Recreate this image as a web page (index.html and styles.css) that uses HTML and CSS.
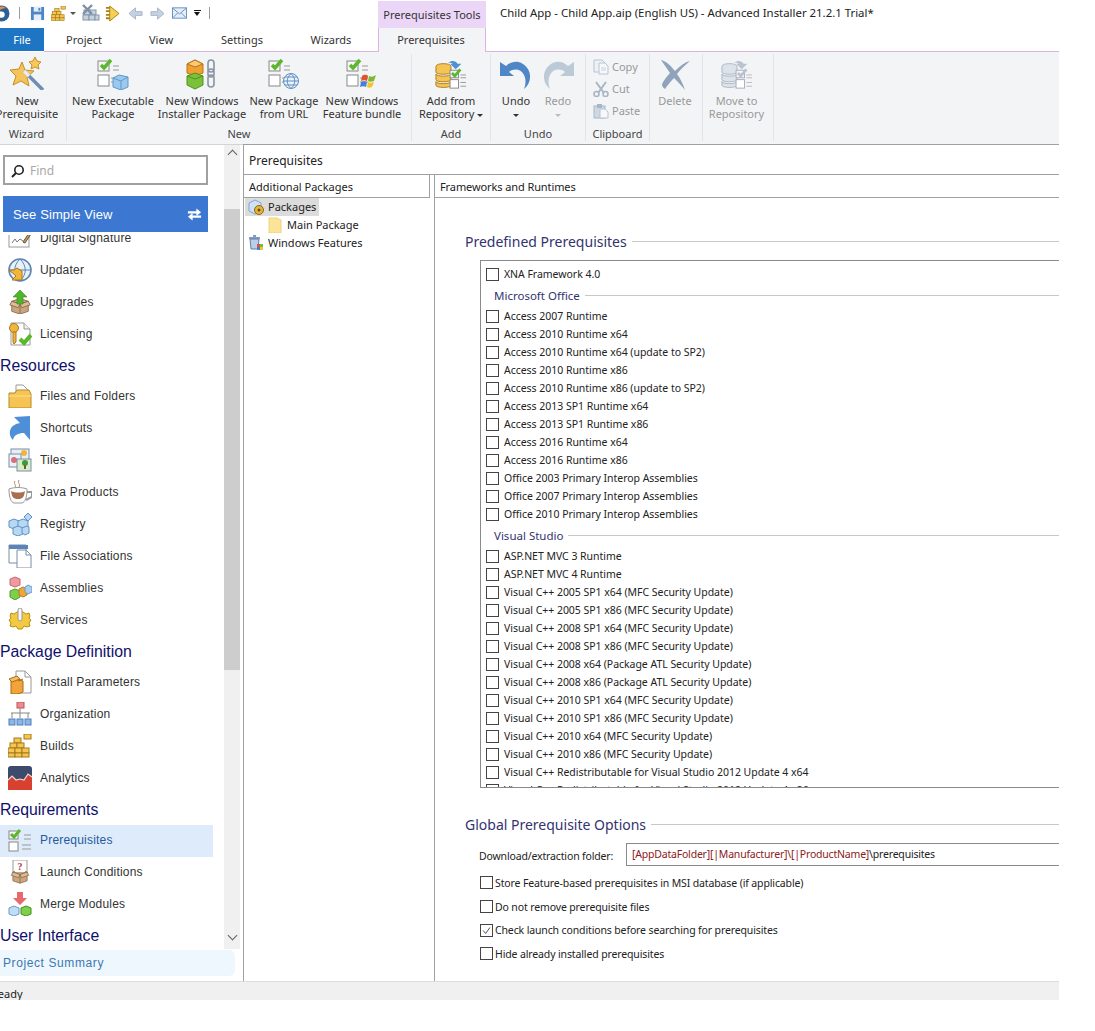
FILE: index.html
```html
<!DOCTYPE html>
<html lang="en">
<head>
<meta charset="utf-8">
<title>Child App - Advanced Installer</title>
<link rel="stylesheet" href="styles.css">
</head>
<body>
<svg class="defs" aria-hidden="true">
<defs>
<symbol id="box" viewBox="0 0 24 24"><path d="M3 9l9-3 9 3v11l-9 3-9-3z" fill="#c9a680" stroke="#8a6a48"/><path d="M3 9l9 3 9-3M12 12v11" fill="none" stroke="#8a6a48"/><path d="M3 9l-2 4 9 3 2-4zM21 9l2 4-9 3-2-4z" fill="#dcbd98" stroke="#8a6a48"/></symbol>
<symbol id="s-sign" viewBox="0 0 24 24"><rect x="1" y="6" width="20" height="15" fill="#fff" stroke="#999"/><path d="M4 17l3-4 2 3 3-3 3 2" fill="none" stroke="#777"/><path d="M15 16l6-9 2 1-6 9z" fill="#d99a2b" stroke="#555"/></symbol>
<symbol id="s-updater" viewBox="0 0 24 24"><circle cx="12" cy="12" r="11" fill="#e8f0f8" stroke="#5b86b5" stroke-width="1.6"/><path d="M1 12h22M12 1c-7 7-7 15 0 22M12 1c7 7 7 15 0 22" fill="none" stroke="#5b86b5"/><path d="M1 12h5l3-2 5 3v9H4l4-4z" fill="#f1b53d" stroke="#a9791c"/></symbol>
<symbol id="s-upgrades" viewBox="0 0 24 24"><use href="#box" y="3" width="22" height="22" x="1"/><path d="M12 0l7 7h-4v7H9V7H5z" fill="#4fb52a" stroke="#3a8f1d" stroke-width=".6"/></symbol>
<symbol id="s-lic" viewBox="0 0 24 24"><path d="M6 1h10l6 6v16H3V1z" fill="#fff" stroke="#999"/><path d="M16 1v6h6" fill="#eee" stroke="#999"/><circle cx="6" cy="6" r="4.5" fill="#f1b53d" stroke="#a9791c"/><path d="M5 10h3v10l-2 2-1-2z" fill="#f1b53d" stroke="#a9791c"/><path d="M12 17l4 4 7-8" fill="none" stroke="#5cb82b" stroke-width="4"/></symbol>
<symbol id="s-folder" viewBox="0 0 24 24"><path d="M8 1h7l5 5v8H8z" fill="#fff" stroke="#999"/><path d="M1 9h6l2-3h12l2 4v14H1z" fill="#f6c453" stroke="#b58a25"/><path d="M1 12h22" stroke="#fbe09a"/></symbol>
<symbol id="s-short" viewBox="0 0 24 24"><path d="M22 0v24L16 17C10 17 6 19 5 24 0 19 0 9 12 7L6 1z" fill="#4d90d8"/></symbol>
<symbol id="s-tiles" viewBox="0 0 24 24"><rect x="3" y="1" width="18" height="14" fill="#e8eef6" stroke="#7a8ea8"/><circle cx="16" cy="5" r="3" fill="#f1b53d"/><rect x="1" y="6" width="12" height="13" fill="#eef2f8" stroke="#7a8ea8"/><circle cx="6" cy="12" r="3" fill="#d8707a"/><rect x="9" y="11" width="14" height="12" fill="#d9ecc8" stroke="#7a8ea8"/><circle cx="17" cy="15" r="3" fill="#3b9a3a"/><path d="M16 17h2v4h-2z" fill="#7a5a30"/></symbol>
<symbol id="s-java" viewBox="0 0 24 24"><path d="M7 1c-2 3 2 4 0 7M11 0c-2 3 2 4 0 7" fill="none" stroke="#b09070"/><path d="M1 9c5-2 13-2 18 0 0 9-2 13-5 14H6C3 22 1 18 1 9z" fill="#fff" stroke="#999"/><path d="M3 11c4 2 11 2 14 0-1 6-2 8-7 8s-6-2-7-8z" fill="#a96f50"/><path d="M19 12h5v5l-6 3" fill="none" stroke="#999" stroke-width="2"/></symbol>
<symbol id="s-reg" viewBox="0 0 24 24"><g fill="#b7d7f3" stroke="#5b93c7"><path d="M1 9l5-2 5 2v6l-5 2-5-2z"/><path d="M10 9l5-2 5 2v6l-5 2-5-2z"/><path d="M5 16l5-2 5 2v6l-5 2-5-2z"/><path d="M14 16l5-2 2 1v6l-4 2-3-2z"/><path d="M16 5l4-4 4 4-4 4z"/></g></symbol>
<symbol id="s-assoc" viewBox="0 0 24 24"><path d="M1 1h17v18H1z" fill="#fff" stroke="#7a8ea8"/><path d="M1 1h19v4H1z" fill="#5b84b8"/><path d="M9 6h9l5 5v13H9z" fill="#fff" stroke="#7a8ea8"/><path d="M18 6v5h5" fill="none" stroke="#7a8ea8"/></symbol>
<symbol id="s-asm" viewBox="0 0 24 24"><path d="M2 3l5-2 5 2v6l-5 2-5-2z" fill="#ef9aa0" stroke="#c76a70"/><path d="M2 15l5-2 5 2v6l-5 3-5-3z" fill="#7ed04a" stroke="#4f9a26"/><path d="M11 13l4-2 4 2v6l-4 2-4-2z" fill="#eea63a" stroke="#b87b1d"/><path d="M17 11l3-2 4 2v5l-4 2-3-2z" fill="#a9d0f0" stroke="#6a9bc9"/></symbol>
<symbol id="s-svc" viewBox="0 0 24 24"><path d="M9 4l3-1 3 1 3 2 3-1 1 3-1 2 2 2-2 3 1 3-3 1-3-1-2 3h-4l-2-3-3 1-3-1 1-3-2-3 2-2-1-2 1-3 3 1z" fill="#f4c93f" stroke="#b58f1a"/><rect x="10" y="0" width="4" height="13" rx="2" fill="#f6f6f6" stroke="#999"/></symbol>
<symbol id="s-inst" viewBox="0 0 24 24"><path d="M8 1h9l6 6v16H8z" fill="#fff" stroke="#999"/><path d="M17 1v6h6" fill="none" stroke="#999"/><path d="M3 11l7-2 5 2v11l-5 2H3z" fill="#f2a33a" stroke="#a96b14"/><path d="M1 9l8-3 3 3-8 3zM10 11l5-2" fill="#f6bd68" stroke="#a96b14"/></symbol>
<symbol id="s-org" viewBox="0 0 24 24"><rect x="9" y="0" width="7" height="6" fill="#ef8a90" stroke="#b9575d"/><path d="M12 6v5M3 11h19M4 11v5M12 11v5M20 11v5" fill="none" stroke="#888"/><g fill="#8cb6e8" stroke="#4f7fb8"><rect x="1" y="17" width="6" height="6"/><rect x="9" y="17" width="6" height="6"/><rect x="17" y="17" width="6" height="6"/></g></symbol>
<symbol id="s-brick" viewBox="0 0 24 24"><g fill="#f6c453" stroke="#a47a19"><rect x="16" y="0" width="7" height="5"/><rect x="6" y="4" width="7" height="5"/><rect x="2" y="9" width="7" height="5"/><rect x="9" y="9" width="7" height="5"/><rect x="0" y="14" width="7" height="5"/><rect x="7" y="14" width="7" height="5"/><rect x="14" y="14" width="7" height="5"/><rect x="0" y="19" width="7" height="4"/><rect x="7" y="19" width="7" height="4"/><rect x="14" y="19" width="7" height="4"/></g></symbol>
<symbol id="s-ana" viewBox="0 0 24 24"><rect width="24" height="24" rx="3" fill="#3c4a6b"/><path d="M0 14l4-4 4 4 4-1 4 1 4-6 4 3v13H0z" fill="#d8412f"/><path d="M0 14l4-4 4 4 4-1 4 1 4-6 4 3" fill="none" stroke="#f0d8d8" stroke-width="1.2"/></symbol>
<symbol id="s-prq" viewBox="0 0 24 24"><rect x="1" y="3" width="9" height="8" fill="#f6f6f6" stroke="#888"/><path d="M3 6l3 3 6-7" fill="none" stroke="#5cb82b" stroke-width="3"/><path d="M16 7h7M16 11h7M14 17h9M14 21h9" stroke="#999"/><rect x="1" y="14" width="9" height="9" fill="#fff" stroke="#888"/></symbol>
<symbol id="s-launch" viewBox="0 0 24 24"><rect x="5" y="0" width="14" height="14" fill="#fff" stroke="#999"/><use href="#box" x="1" y="5" width="22" height="19"/><rect x="7" y="1" width="10" height="11" fill="#fff"/><text x="12" y="10" class="qmark">?</text></symbol>
<symbol id="s-merge" viewBox="0 0 24 24"><path d="M9 0h6v6h4l-7 7-7-7h4z" fill="#e9686b"/><path d="M1 16l5-2 5 2v6l-5 2-5-2z" fill="#c0ddf3" stroke="#6a9bc9"/><path d="M13 16l5-2 5 2v6l-5 2-5-2z" fill="#7ed04a" stroke="#3f8f1c"/></symbol>
<symbol id="i-logo" viewBox="0 0 16 16"><circle cx="8" cy="8" r="7.5" fill="#2d5f96"/><path d="M2 6c3-5 8-6 10-3-3 0-6 1-7 4z" fill="#ef8d3a"/><circle cx="8" cy="9" r="3" fill="#fff"/></symbol>
<symbol id="i-save" viewBox="0 0 16 16"><path d="M1 1h14v14H1z" fill="#4d86c6"/><path d="M4 1h8v5H4z" fill="#e4eef8"/><path d="M4 9h8v6H4z" fill="#e4eef8"/><path d="M9 2h2v3H9z" fill="#4d86c6"/></symbol>
<symbol id="i-xbrick" viewBox="0 0 18 18"><g fill="#c8d2de" stroke="#8496ab"><rect x="2" y="6" width="6" height="5"/><rect x="8" y="6" width="6" height="5"/><rect x="1" y="11" width="6" height="5"/><rect x="7" y="11" width="6" height="5"/><rect x="13" y="11" width="4" height="5"/></g><path d="M1 1l9 9M10 1L1 10" stroke="#7d90a6" stroke-width="2.4"/></symbol>
<symbol id="i-play" viewBox="0 0 16 18"><path d="M5 1l10 8-10 8z" fill="#f7cf55" stroke="#a68114"/><path d="M1 3h4M1 6.5h4M1 10.500h4M1 14h4" stroke="#a68114" stroke-width="2"/></symbol>
<symbol id="i-back" viewBox="0 0 16 16"><path d="M8 2L1 8l7 6v-4h7V6H8z" fill="#c6d2e2" stroke="#a5b5ca"/></symbol>
<symbol id="i-fwd" viewBox="0 0 16 16"><path d="M8 2l7 6-7 6v-4H1V6h7z" fill="#c6d2e2" stroke="#a5b5ca"/></symbol>
<symbol id="i-mail" viewBox="0 0 16 12"><rect x=".5" y=".5" width="15" height="11" fill="#e6eef8" stroke="#5f8ec2"/><path d="M1 1l7 6 7-6M1 11l5-5M15 11l-5-5" fill="none" stroke="#5f8ec2"/></symbol>
<symbol id="r-wizard" viewBox="0 0 36 34"><path d="M13 6l3 8 9 1-7 6 2 9-8-5-8 4 3-9-6-6 9-1z" fill="#f4c35a" stroke="#c78f25"/><path d="M26 1l2 4 4 1-3 3 1 4-4-2-4 2 1-4-3-3 4-1z" fill="#f7c95b" stroke="#c78f25"/><path d="M15 15l19 19" stroke="#6d8fb5" stroke-width="3.5"/><path d="M15 15l5 5" stroke="#e8eef5" stroke-width="3.500"/></symbol>
<symbol id="r-exe" viewBox="0 0 32 32"><rect x="1" y="3" width="11" height="10" fill="#f6f6f6" stroke="#888"/><path d="M4 7l3 3 7-8" fill="none" stroke="#5cb82b" stroke-width="3.500"/><path d="M16 8h6M16 12h6M14 20h8M14 24h8" stroke="#999"/><rect x="1" y="17" width="11" height="11" fill="#fff" stroke="#888"/><path d="M16 20l6-3 9 2v10l-7 3-8-3z" fill="#9cc8ee" stroke="#5f98cf"/><path d="M16 20l8 3 7-4M24 23v9" fill="none" stroke="#5f98cf"/></symbol>
<symbol id="r-msi" viewBox="0 0 32 30"><path d="M1 5l8-4 8 4v9l-8 3-8-3z" fill="#f0a030" stroke="#b87414"/><path d="M1 5l8 3 8-3-8-4z" fill="#f9c878" stroke="#b87414"/><path d="M1 17l8-3 8 3v9l-8 4-8-4z" fill="#7bc23a" stroke="#4f9020"/><path d="M1 17l8 3 8-3" fill="none" stroke="#4f9020"/><g fill="none" stroke="#8894a4" stroke-width="1.600"><rect x="22" y="1" width="6" height="12" rx="3"/><rect x="22" y="10" width="6" height="8" rx="3"/><rect x="22" y="16" width="6" height="12" rx="3"/></g></symbol>
<symbol id="r-url" viewBox="0 0 32 32"><use href="#r-prqbase" width="32" height="32"/><circle cx="23" cy="23" r="7.500" fill="#eaf2fa" stroke="#5f8ec2"/><path d="M15.500 23h15M23 15.500c-5 5-5 10 0 15M23 15.500c5 5 5 10 0 15M17 19h12M17 27h12" fill="none" stroke="#5f8ec2"/></symbol>
<symbol id="r-prqbase" viewBox="0 0 32 32"><rect x="1" y="3" width="11" height="10" fill="#f6f6f6" stroke="#888"/><path d="M4 7l3 3 7-8" fill="none" stroke="#5cb82b" stroke-width="3.500"/><path d="M16 8h6M16 12h6M14 20h8M14 24h8" stroke="#999"/><rect x="1" y="17" width="11" height="11" fill="#fff" stroke="#888"/></symbol>
<symbol id="r-win" viewBox="0 0 32 32"><use href="#r-prqbase" width="32" height="32"/><path d="M16 18c3-2 5-1 6 0l-1 5c-2-1-4-1-6 0z" fill="#e0532f"/><path d="M23 18c2 1 4 1 7-1l-2 6c-2 1-5 1-6 0z" fill="#7eb936"/><path d="M15 24c2-1 4-1 6 0l-1 5c-2-1-4-1-6 0z" fill="#3f82d6"/><path d="M22 24c1 1 4 1 6 0l-2 5c-2 1-4 1-5 0z" fill="#f4c42b"/></symbol>
<symbol id="r-add" viewBox="0 0 34 34"><g fill="#f6c453" stroke="#a67c1c"><path d="M1 9c0-4 16-4 16 0v6c0 3-16 3-16 0z"/><path d="M1 17c0 3 16 3 16 0v6c0 3-16 3-16 0z"/><path d="M1 25c0 3 16 3 16 0v4c0 3-16 3-16 0z"/></g><path d="M14 5c4-3 8-2 10 1h4l-6 6-6-6h3c-1-1-3-1-5-1z" fill="#4f8fd4"/><rect x="16" y="13" width="9" height="8" fill="#f6f6f6" stroke="#888"/><path d="M18 16l3 3 6-7" fill="none" stroke="#5cb82b" stroke-width="3"/><path d="M27 18h6M27 21h6M27 26h6M27 30h6" stroke="#999"/><rect x="16" y="23" width="9" height="9" fill="#fff" stroke="#888"/></symbol>
<symbol id="r-move" viewBox="0 0 34 34"><g fill="#dde3ea" stroke="#aab4c0"><path d="M1 9c0-4 16-4 16 0v6c0 3-16 3-16 0z"/><path d="M1 17c0 3 16 3 16 0v6c0 3-16 3-16 0z"/><path d="M1 25c0 3 16 3 16 0v4c0 3-16 3-16 0z"/></g><path d="M14 5c4-3 8-2 10 1h4l-6 6-6-6h3c-1-1-3-1-5-1z" fill="#b8c4d2"/><rect x="16" y="13" width="9" height="8" fill="#f6f6f6" stroke="#aab"/><path d="M18 16l3 3 6-7" fill="none" stroke="#b8c4d2" stroke-width="3"/><path d="M27 18h6M27 21h6M27 26h6M27 30h6" stroke="#bbb"/><rect x="16" y="23" width="9" height="9" fill="#fff" stroke="#aab"/></symbol>
<symbol id="r-undo" viewBox="0 0 32 30"><path d="M0 2v14h14L9 12c5-4 12-3 15 3 2 4 2 9 0 14 6-5 8-13 4-20C23 1 13-1 6 6z" fill="#4f86c6"/></symbol>
<symbol id="r-redo" viewBox="0 0 32 30"><path d="M32 2v14H18l5-4c-5-4-12-3-15 3-2 4-2 9 0 14C2 24 0 16 4 9 9 1 19-1 26 6z" fill="#bccad8"/></symbol>
<symbol id="r-del" viewBox="0 0 30 30"><path d="M1 0c5 1 10 6 14 11C20 6 25 2 30 1 25 5 20 10 17 14c3 4 6 10 8 16-4-5-8-9-11-12C10 22 7 26 5 29c-2-1-3-3-3-5 2-4 5-8 8-11C7 9 4 4 1 0z" fill="#8fa3ba"/></symbol>
<symbol id="r-copy" viewBox="0 0 16 16"><path d="M1 1h8l3 3v9H1z" fill="#eef1f5" stroke="#b8c4d2"/><path d="M6 4h6l3 3v8H6z" fill="#f7f8fa" stroke="#b8c4d2"/><path d="M8 9h5M8 11h5" stroke="#c8d2de"/></symbol>
<symbol id="r-cut" viewBox="0 0 16 16"><path d="M3 1l8 11M13 1L5 12" stroke="#a8b6c6" stroke-width="2"/><circle cx="3.500" cy="13" r="2.500" fill="none" stroke="#a8b6c6" stroke-width="1.600"/><circle cx="12.500" cy="13" r="2.500" fill="none" stroke="#a8b6c6" stroke-width="1.600"/></symbol>
<symbol id="r-paste" viewBox="0 0 16 16"><rect x="1" y="3" width="11" height="12" fill="#cfd8e2" stroke="#a8b6c6"/><rect x="4" y="1" width="5" height="4" fill="#a8b6c6"/><path d="M7 6h5l3 3v6H7z" fill="#f7f8fa" stroke="#b8c4d2"/></symbol>
<symbol id="t-swap" viewBox="0 0 16 14"><path d="M1 4h9V1l5 4-5 4V6.500H1zM15 8.500H6V6L1 10l5 4v-3h9z" fill="#fff"/></symbol>
<symbol id="t-pkg" viewBox="0 0 16 16"><path d="M1 4l6-3 6 3v8l-6 3-6-3z" fill="#cfe2f5" stroke="#7ea7cf"/><circle cx="11" cy="11" r="4.500" fill="#e6b23a" stroke="#8a6a14"/><circle cx="11" cy="11" r="1.500" fill="#6a4f10"/></symbol>
<symbol id="t-fold" viewBox="0 0 14 16"><path d="M1 1h8l4 2v13H1z" fill="#fbe49a" stroke="#efd27a"/></symbol>
<symbol id="t-win" viewBox="0 0 16 16"><path d="M2 4h9l-1 10H3z" fill="#b9cfe6" stroke="#5f7fa5"/><path d="M1 3h11M5 1h3" stroke="#5f7fa5" stroke-width="1.400"/><path d="M9 9h3v3H9z" fill="#e0532f"/><path d="M12 9h3v3h-3z" fill="#7eb936"/><path d="M9 12h3v3H9z" fill="#3f82d6"/><path d="M12 12h3v3h-3z" fill="#f4c42b"/></symbol>
</defs>
</svg>

<div class="app">
  <header class="titlebar">
    <div class="qat">
      <svg class="qi qi-logo"><use href="#i-logo"/></svg>
      <span class="qsep qsep-a"></span>
      <svg class="qi"><use href="#i-save"/></svg>
      <svg class="qi qi-brick"><use href="#s-brick"/></svg>
      <span class="caret caret-q"></span>
      <svg class="qi qi-x"><use href="#i-xbrick"/></svg>
      <svg class="qi qi-play"><use href="#i-play"/></svg>
      <svg class="qi qi-back"><use href="#i-back"/></svg>
      <svg class="qi qi-fwd"><use href="#i-fwd"/></svg>
      <svg class="qi qi-mail"><use href="#i-mail"/></svg>
      <span class="qcustom"></span>
      <span class="qsep qsep-b"></span>
    </div>
    <div class="ctx-tab">Prerequisites Tools</div>
    <div class="app-title">Child App - Child App.aip (English US) - Advanced Installer 21.2.1 Trial*</div>
  </header>

  <nav class="tabs">
    <span class="tab tab-file">File</span>
    <span class="tab tab-project">Project</span>
    <span class="tab tab-view">View</span>
    <span class="tab tab-settings">Settings</span>
    <span class="tab tab-wizards">Wizards</span>
    <span class="tab tab-active">Prerequisites</span>
    <span class="tab-rest"></span>
  </nav>

  <section class="ribbon">
    <div class="group g-wizard">
      <div class="g-body">
        <div class="rbtn w-wiz"><svg class="ri ri-wiz"><use href="#r-wizard"/></svg><span class="rl">New<br>Prerequisite</span></div>
      </div>
      <div class="g-label g-label-wiz">Wizard</div>
    </div>
    <div class="group g-new">
      <div class="g-body">
        <div class="rbtn w-exe"><svg class="ri"><use href="#r-exe"/></svg><span class="rl">New Executable<br>Package</span></div>
        <div class="rbtn w-msi"><svg class="ri"><use href="#r-msi"/></svg><span class="rl">New Windows<br>Installer Package</span></div>
        <div class="rbtn w-url"><svg class="ri"><use href="#r-url"/></svg><span class="rl">New Package<br>from URL</span></div>
        <div class="rbtn w-win"><svg class="ri"><use href="#r-win"/></svg><span class="rl">New Windows<br>Feature bundle</span></div>
      </div>
      <div class="g-label">New</div>
    </div>
    <div class="group g-add">
      <div class="g-body">
        <div class="rbtn w-full"><svg class="ri"><use href="#r-add"/></svg><span class="rl">Add from<br>Repository <i class="caret"></i></span></div>
      </div>
      <div class="g-label">Add</div>
    </div>
    <div class="group g-undo">
      <div class="g-body">
        <div class="rbtn w-undo"><svg class="ri ri-undo"><use href="#r-undo"/></svg><span class="rl">Undo<br><i class="caret"></i></span></div>
        <div class="rbtn w-undo off"><svg class="ri ri-undo"><use href="#r-redo"/></svg><span class="rl">Redo<br><i class="caret"></i></span></div>
      </div>
      <div class="g-label">Undo</div>
    </div>
    <div class="group g-clip">
      <div class="clip-list off">
        <div class="clip"><svg class="ci"><use href="#r-copy"/></svg>Copy</div>
        <div class="clip"><svg class="ci"><use href="#r-cut"/></svg>Cut</div>
        <div class="clip"><svg class="ci"><use href="#r-paste"/></svg>Paste</div>
      </div>
      <div class="g-label">Clipboard</div>
    </div>
    <div class="group g-del">
      <div class="g-body">
        <div class="rbtn w-full off"><svg class="ri ri-del"><use href="#r-del"/></svg><span class="rl">Delete</span></div>
      </div>
      <div class="g-label"></div>
    </div>
    <div class="group g-move">
      <div class="g-body">
        <div class="rbtn w-full off"><svg class="ri"><use href="#r-move"/></svg><span class="rl">Move to<br>Repository</span></div>
      </div>
      <div class="g-label"></div>
    </div>
  </section>

  <main class="body">
    <aside class="side">
      <div class="side-top">
        <div class="side-col">
          <div class="find"><svg class="find-i" viewBox="0 0 14 14"><circle cx="8" cy="6" r="4.200" fill="none" stroke="#222" stroke-width="1.600"/><path d="M5 9l-4 4" stroke="#222" stroke-width="2"/></svg><span>Find</span></div>
          <div class="simple"><span>See Simple View</span><svg class="swap"><use href="#t-swap"/></svg></div>
          <div class="nav">
            <div class="nav-item first"><svg class="ni"><use href="#s-sign"/></svg>Digital Signature</div>
            <div class="nav-item"><svg class="ni"><use href="#s-updater"/></svg>Updater</div>
            <div class="nav-item"><svg class="ni"><use href="#s-upgrades"/></svg>Upgrades</div>
            <div class="nav-item"><svg class="ni"><use href="#s-lic"/></svg>Licensing</div>
            <h2 class="nav-head">Resources</h2>
            <div class="nav-item"><svg class="ni"><use href="#s-folder"/></svg>Files and Folders</div>
            <div class="nav-item"><svg class="ni"><use href="#s-short"/></svg>Shortcuts</div>
            <div class="nav-item"><svg class="ni"><use href="#s-tiles"/></svg>Tiles</div>
            <div class="nav-item"><svg class="ni"><use href="#s-java"/></svg>Java Products</div>
            <div class="nav-item"><svg class="ni"><use href="#s-reg"/></svg>Registry</div>
            <div class="nav-item"><svg class="ni"><use href="#s-assoc"/></svg>File Associations</div>
            <div class="nav-item"><svg class="ni"><use href="#s-asm"/></svg>Assemblies</div>
            <div class="nav-item"><svg class="ni"><use href="#s-svc"/></svg>Services</div>
            <h2 class="nav-head">Package Definition</h2>
            <div class="nav-item"><svg class="ni"><use href="#s-inst"/></svg>Install Parameters</div>
            <div class="nav-item"><svg class="ni"><use href="#s-org"/></svg>Organization</div>
            <div class="nav-item"><svg class="ni"><use href="#s-brick"/></svg>Builds</div>
            <div class="nav-item"><svg class="ni"><use href="#s-ana"/></svg>Analytics</div>
            <h2 class="nav-head nav-head-req">Requirements</h2>
            <div class="nav-item sel"><svg class="ni"><use href="#s-prq"/></svg>Prerequisites</div>
            <div class="nav-item"><svg class="ni"><use href="#s-launch"/></svg>Launch Conditions</div>
            <div class="nav-item"><svg class="ni"><use href="#s-merge"/></svg>Merge Modules</div>
            <h2 class="nav-head">User Interface</h2>
          </div>
        </div>
        <div class="sbar">
          <span class="sb-arrow up"></span>
          <div class="sb-thumb"></div>
          <span class="sb-arrow down"></span>
        </div>
      </div>
      <div class="summary">Project Summary</div>
    </aside>

    <div class="pane">
      <div class="pane-head">Prerequisites</div>
      <div class="pane-row">
        <div class="left-panel">
          <div class="panel-head">Additional Packages</div>
          <div class="tree">
            <div class="node node-sel"><svg class="ti"><use href="#t-pkg"/></svg>Packages</div>
            <div class="node node-sub"><svg class="ti ti-fold"><use href="#t-fold"/></svg>Main Package</div>
            <div class="node"><svg class="ti"><use href="#t-win"/></svg>Windows Features</div>
          </div>
        </div>
        <div class="right-panel">
          <div class="panel-head panel-head-r">Frameworks and Runtimes</div>
          <div class="section section-first"><span>Predefined Prerequisites</span><i class="rule"></i></div>
          <div class="plist">
            <label class="pr first-pr"><i class="cb"></i>XNA Framework 4.0</label>
            <div class="pgroup"><span>Microsoft Office</span><i class="rule"></i></div>
            <label class="pr"><i class="cb"></i>Access 2007 Runtime</label>
            <label class="pr"><i class="cb"></i>Access 2010 Runtime x64</label>
            <label class="pr"><i class="cb"></i>Access 2010 Runtime x64 (update to SP2)</label>
            <label class="pr"><i class="cb"></i>Access 2010 Runtime x86</label>
            <label class="pr"><i class="cb"></i>Access 2010 Runtime x86 (update to SP2)</label>
            <label class="pr"><i class="cb"></i>Access 2013 SP1 Runtime x64</label>
            <label class="pr"><i class="cb"></i>Access 2013 SP1 Runtime x86</label>
            <label class="pr"><i class="cb"></i>Access 2016 Runtime x64</label>
            <label class="pr"><i class="cb"></i>Access 2016 Runtime x86</label>
            <label class="pr"><i class="cb"></i>Office 2003 Primary Interop Assemblies</label>
            <label class="pr"><i class="cb"></i>Office 2007 Primary Interop Assemblies</label>
            <label class="pr"><i class="cb"></i>Office 2010 Primary Interop Assemblies</label>
            <div class="pgroup"><span>Visual Studio</span><i class="rule"></i></div>
            <label class="pr"><i class="cb"></i>ASP.NET MVC 3 Runtime</label>
            <label class="pr"><i class="cb"></i>ASP.NET MVC 4 Runtime</label>
            <label class="pr"><i class="cb"></i>Visual C++ 2005 SP1 x64 (MFC Security Update)</label>
            <label class="pr"><i class="cb"></i>Visual C++ 2005 SP1 x86 (MFC Security Update)</label>
            <label class="pr"><i class="cb"></i>Visual C++ 2008 SP1 x64 (MFC Security Update)</label>
            <label class="pr"><i class="cb"></i>Visual C++ 2008 SP1 x86 (MFC Security Update)</label>
            <label class="pr"><i class="cb"></i>Visual C++ 2008 x64 (Package ATL Security Update)</label>
            <label class="pr"><i class="cb"></i>Visual C++ 2008 x86 (Package ATL Security Update)</label>
            <label class="pr"><i class="cb"></i>Visual C++ 2010 SP1 x64 (MFC Security Update)</label>
            <label class="pr"><i class="cb"></i>Visual C++ 2010 SP1 x86 (MFC Security Update)</label>
            <label class="pr"><i class="cb"></i>Visual C++ 2010 x64 (MFC Security Update)</label>
            <label class="pr"><i class="cb"></i>Visual C++ 2010 x86 (MFC Security Update)</label>
            <label class="pr"><i class="cb"></i>Visual C++ Redistributable for Visual Studio 2012 Update 4 x64</label>
            <label class="pr"><i class="cb"></i>Visual C++ Redistributable for Visual Studio 2012 Update 4 x86</label>
          </div>
          <div class="section section-global"><span>Global Prerequisite Options</span><i class="rule"></i></div>
          <div class="folder-row">
            <span class="folder-label">Download/extraction folder:</span>
            <div class="folder-input"><span class="prop">[AppDataFolder][|Manufacturer]\[|ProductName]</span>\prerequisites</div>
          </div>
          <div class="opts">
            <label class="opt"><i class="cb"></i>Store Feature-based prerequisites in MSI database (if applicable)</label>
            <label class="opt"><i class="cb"></i>Do not remove prerequisite files</label>
            <label class="opt"><i class="cb cb-on"><svg viewBox="0 0 13 13"><path d="M2.500 6.500l3 3.500 5-7" fill="none" stroke="#444" stroke-width="1.100"/></svg></i>Check launch conditions before searching for prerequisites</label>
            <label class="opt"><i class="cb"></i>Hide already installed prerequisites</label>
          </div>
        </div>
      </div>
    </div>
  </main>

  <footer class="status"><span>Ready</span></footer>
</div>
</body>
</html>
```

FILE: styles.css
```css
* { box-sizing: border-box; }
html, body { margin: 0; padding: 0; background: #fff; }
body { font-family: "Noto Sans", "Liberation Sans", sans-serif; font-size: 11px; color: #222; overflow: hidden; }
.defs { width: 0; height: 0; display: block; overflow: hidden; }
.qmark { font: bold 10px "Liberation Serif", serif; fill: #c0303a; text-anchor: middle; }

.app { width: 1059px; height: 1000px; display: flex; flex-direction: column; overflow: hidden; background: #fff; }

/* title bar */
.titlebar { height: 28px; display: flex; flex: none; }
.qat { width: 378px; flex: none; display: flex; align-items: center; height: 26px; }
.qi { width: 15px; height: 15px; flex: none; }
.qi-logo { width: 17px; height: 17px; margin-left: -7px; }
.qsep { width: 1px; height: 12px; background: #9a9a9a; flex: none; }
.qsep-a { margin: 0 10px 0 9px; }
.qi-brick { margin-left: 6px; }
.caret { display: inline-block; width: 0; height: 0; border-left: 3px solid transparent; border-right: 3px solid transparent; border-top: 3px solid #333; vertical-align: middle; }
.caret-q { margin-left: 4px; border-top-color: #555; }
.qi-x { width: 18px; height: 18px; margin-left: 6px; }
.qi-play { width: 15px; height: 17px; margin-left: 5px; }
.qi-back { margin-left: 8px; }
.qi-fwd { margin-left: 7px; }
.qi-mail { width: 15px; height: 12px; margin-left: 7px; }
.qcustom { width: 7px; height: 6px; margin-left: 7px; flex: none; border-top: 1px solid #111; }
.qcustom::after { content: ""; display: block; width: 0; height: 0; margin-top: 1px; border-left: 3.500px solid transparent; border-right: 3.500px solid transparent; border-top: 4px solid #111; }
.qsep-b { margin-left: 8px; }
.ctx-tab { width: 108px; flex: none; margin-top: 1px; background: #ecd6f7; text-align: center; line-height: 27px; font-size: 11px; color: #333; }
.app-title { padding-left: 14px; line-height: 26px; font-size: 11.400px; color: #222; white-space: nowrap; }

/* tabs */
.tabs { height: 24px; flex: none; display: flex; font-size: 11px; line-height: 23px; color: #333; }
.tab { text-align: center; border-bottom: 1px solid #d9b2e6; }
.tab-file { width: 44px; background: #1d75c4; color: #fff; border-bottom: 0; height: 23px; }
.tab-project { width: 80px; }
.tab-view { width: 74px; }
.tab-settings { width: 88px; }
.tab-wizards { width: 92px; padding-right: 2px; }
.tab-active { width: 108px; padding-right: 2px; background: #f3f4f6; border: 1px solid #d9b2e6; border-top: 0; border-bottom: 0; }
.tab-rest { flex: 1; border-bottom: 1px solid #d9b2e6; }

/* ribbon */
.ribbon { height: 92px; flex: none; display: flex; background: #f3f4f6; font-size: 11px; color: #333; }
.group { display: flex; flex-direction: column; border-right: 1px solid #e2e4e7; margin: 2px 0 3px; flex: none; }
.g-wizard { width: 67px; }
.g-new { width: 345px; }
.g-add { width: 79px; }
.g-undo { width: 95px; }
.g-clip { width: 64px; }
.g-del { width: 53px; padding-right: 2px; }
.g-move { width: 71px; padding-right: 3px; }
.g-body { height: 70px; flex: none; display: flex; }
.g-new .g-body { padding-left: 3px; }
.g-undo .g-body { padding-left: 4px; }
.g-label { height: 17px; line-height: 19px; text-align: center; color: #444; flex: none; }
.g-label-wiz { padding-right: 13px; }
.rbtn { display: flex; flex-direction: column; align-items: center; flex: none; }
.w-wiz { width: 54px; }
.w-exe { width: 86px; }
.w-msi { width: 92px; }
.w-url { width: 72px; }
.w-win { width: 84px; }
.w-full { width: 100%; }
.w-undo { width: 42px; }
.ri { width: 32px; height: 32px; margin-top: 4px; flex: none; }
.ri-wiz { width: 36px; height: 34px; margin-top: 2px; margin-left: -1px; }
.ri-undo { width: 32px; height: 30px; margin-top: 6px; }
.ri-del { width: 30px; height: 30px; margin-top: 6px; }
.rl { margin-top: 4px; line-height: 13px; text-align: center; white-space: nowrap; }
.off { color: #999; }
.off .caret { border-top-color: #bbb; }
.clip-list { height: 70px; flex: none; padding: 2px 0 0 7px; }
.clip { height: 22px; line-height: 20px; display: flex; gap: 3px; align-items: center; }
.ci { width: 16px; height: 16px; flex: none; }

/* body */
.body { flex: 1; display: flex; min-height: 0; }
.side { width: 243px; flex: none; display: flex; flex-direction: column; border-top: 1px solid #d4d4d4; font-family: "Liberation Sans", Arial, sans-serif; }
.side-top { height: 804px; flex: none; display: flex; }
.side-col { width: 224px; flex: none; display: flex; flex-direction: column; }
.find { margin: 10px 16px 0 3px; height: 30px; border: 2px solid #a0a0a0; display: flex; align-items: center; padding-left: 6px; gap: 5px; font-family: "Noto Sans", sans-serif; font-size: 12px; color: #a8a8a8; flex: none; }
.find-i { width: 14px; height: 14px; margin-top: 2px; }
.simple { margin: 11px 16px 0 3px; height: 36px; background: #3c78d2; color: #fff; display: flex; align-items: center; justify-content: space-between; padding: 0 6px 0 10px; font-size: 13px; letter-spacing: .1px; flex: none; }
.swap { width: 15px; height: 14px; }
.nav { flex: 1; min-height: 0; overflow: hidden; margin-top: 3px; }
.nav-item { height: 32px; display: flex; align-items: center; padding-left: 8px; gap: 8px; font-size: 12px; letter-spacing: .2px; color: #333; }
.nav-item.first { margin-top: -13px; }
.ni { width: 24px; height: 24px; flex: none; }
.nav-item.sel { background: #ddebfa; color: #1f5c9e; width: 213px; padding-bottom: 2px; margin-bottom: -1px; }
.nav-head { margin: 0; height: 30px; line-height: 32px; font-size: 15.800px; font-weight: 400; color: #10106a; white-space: nowrap; }
.nav-head-req { height: 31px; }
.sbar { width: 16px; flex: none; background: #f0f0f0; display: flex; flex-direction: column; align-items: center; }
.sb-arrow { width: 7px; height: 7px; border-left: 1.500px solid #606060; border-top: 1.500px solid #606060; flex: none; }
.sb-arrow.up { transform: rotate(45deg); margin-top: 6px; }
.sb-arrow.down { transform: rotate(225deg); margin-bottom: 10px; }
.sb-thumb { width: 100%; height: 461px; background: #cdcdcd; margin-top: 51px; margin-bottom: auto; }
.summary { width: 235px; height: 26px; margin-top: 1px; background: #eef6fe; border-radius: 0 6px 6px 0; padding-left: 3px; line-height: 27px; font-size: 12px; letter-spacing: .6px; color: #3a78b0; flex: none; }

.pane { flex: 1; min-width: 0; border-left: 1px solid #a0a0a0; border-top: 1px solid #a0a0a0; display: flex; flex-direction: column; }
.pane-head { height: 30px; flex: none; border-bottom: 1px solid #a0a0a0; padding-left: 5px; line-height: 31px; font-size: 12px; color: #222; }
.pane-row { flex: 1; display: flex; min-height: 0; }
.left-panel { width: 186px; flex: none; }
.panel-head { height: 23px; border-bottom: 1px solid #a0a0a0; border-right: 1px solid #a0a0a0; padding-left: 5px; line-height: 23px; font-size: 11px; color: #222; }
.panel-head-r { border-right: 0; letter-spacing: -.1px; }
.tree { padding: 0 0 0 1px; font-size: 11px; color: #222; }
.node { height: 18px; display: flex; align-items: center; gap: 4px; padding-left: 3px; width: max-content; line-height: 18px; }
.node-sel { background: #dcdcdc; padding-right: 3px; }
.node-sub { padding-left: 23px; gap: 5px; }
.ti { width: 16px; height: 16px; flex: none; }
.ti-fold { width: 14px; }
.right-panel { flex: 1; min-width: 0; margin-left: 4px; border-left: 1px solid #a0a0a0; overflow: hidden; }
.section { display: flex; align-items: center; gap: 5px; height: 20px; margin-left: 30px; font-size: 14px; color: #33336e; white-space: nowrap; }
.section-first { margin-top: 33px; }
.section-global { margin-top: 26px; }
.rule { flex: 1; height: 1px; background: #c8c8c8; display: block; }
.plist { margin: 9px 0 0 45px; height: 528px; border: 1px solid #8a8a8a; border-right: 0; padding-top: 4px; overflow: hidden; }
.pr { height: 18px; display: flex; align-items: center; padding-left: 5px; gap: 5px; white-space: nowrap; font-size: 10.500px; letter-spacing: -.03px; color: #222; }
.cb { width: 13px; height: 13px; border: 1px solid #444; background: #fff; flex: none; display: block; }
.cb svg { display: block; width: 11px; height: 11px; }
.pgroup { height: 24px; display: flex; align-items: center; gap: 5px; padding-left: 13px; font-size: 11.500px; color: #33336e; white-space: nowrap; }
.folder-row { display: flex; margin: 9px 0 0 44px; height: 23px; align-items: center; }
.folder-label { width: 147px; flex: none; font-size: 10.500px; letter-spacing: -.15px; color: #222; margin-top: 2px; }
.folder-input { flex: 1; height: 23px; border: 1px solid #8a8a8a; border-right: 0; padding-left: 5px; line-height: 21px; font-size: 10.500px; letter-spacing: -.2px; color: #222; white-space: nowrap; }
.prop { color: #8a2020; }
.opts { margin: 5px 0 0 45px; }
.opt { height: 23.700px; display: flex; align-items: center; gap: 2px; font-size: 10.500px; letter-spacing: -.13px; color: #222; white-space: nowrap; }

.status { height: 19px; flex: none; background: #f0f0f0; border-top: 1px solid #dcdcdc; font-size: 11px; color: #222; }
.status span { display: block; margin-left: -9px; line-height: 24px; }
```
